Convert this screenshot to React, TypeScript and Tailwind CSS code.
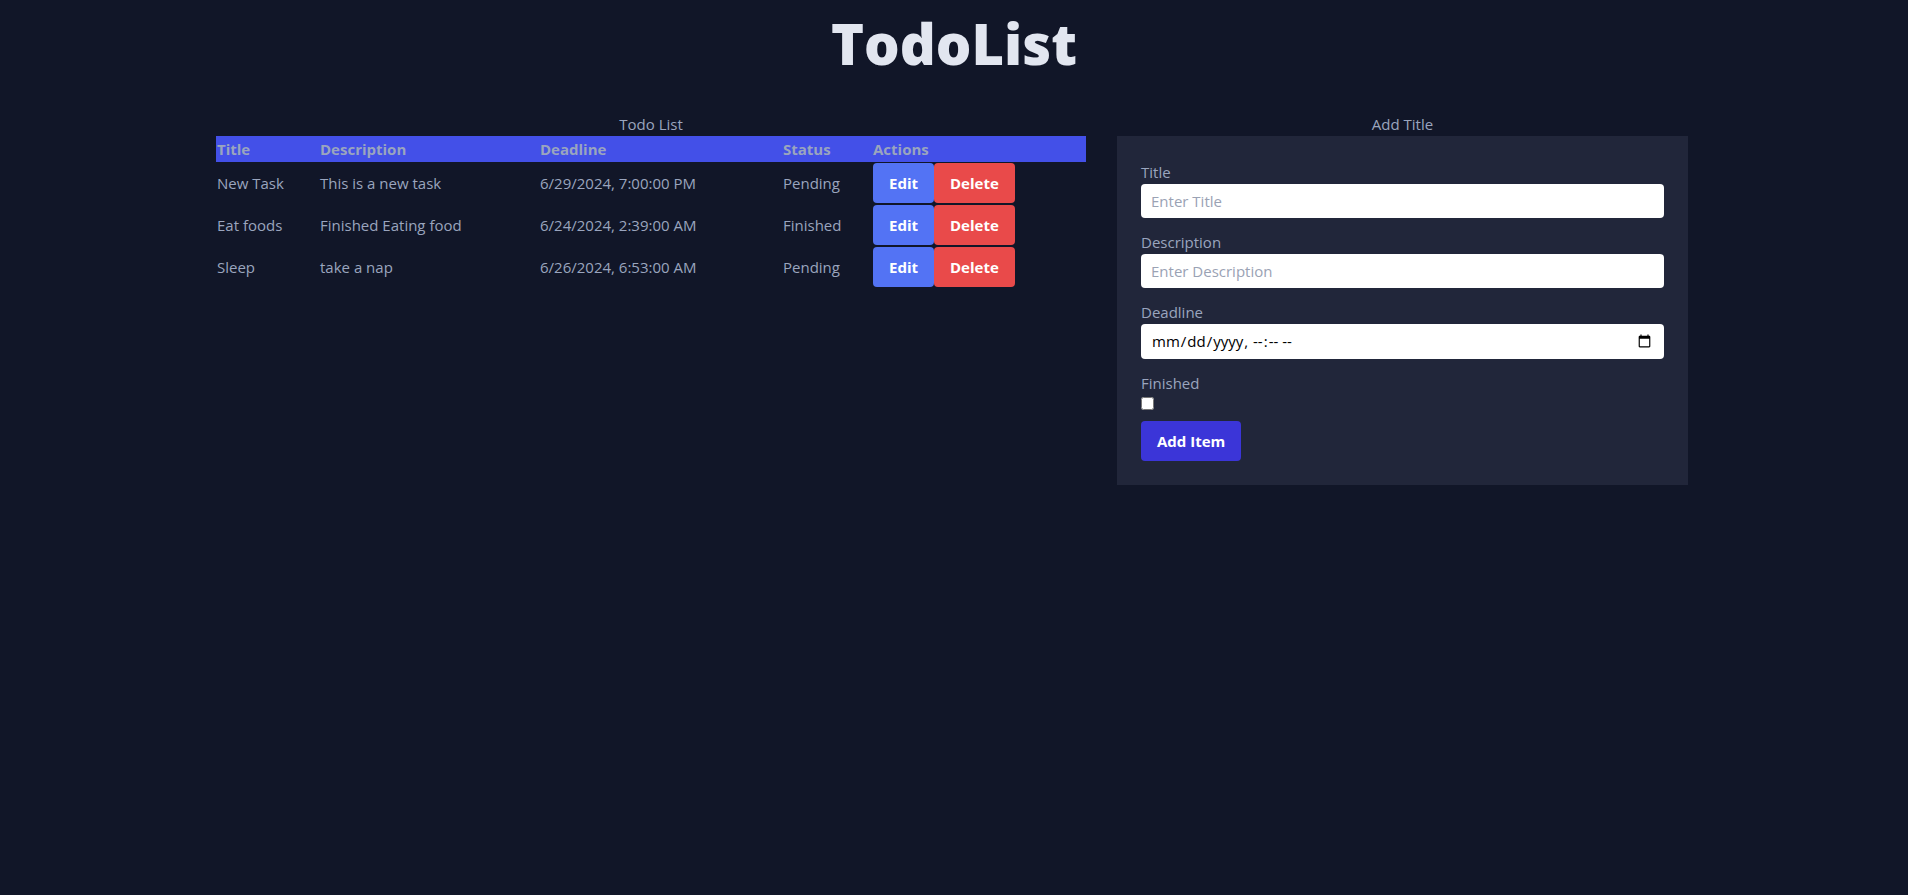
import React from "react";

const todos = [
  { title: "New Task", description: "This is a new task", deadline: "6/29/2024, 7:00:00 PM", status: "Pending" },
  { title: "Eat foods", description: "Finished Eating food", deadline: "6/24/2024, 2:39:00 AM", status: "Finished" },
  { title: "Sleep", description: "take a nap", deadline: "6/26/2024, 6:53:00 AM", status: "Pending" },
];

export default function App() {
  return (
    <div className="min-h-[895px] w-full bg-[#111628] font-['Open_Sans',sans-serif] text-[15px] text-[#9aa5be]">
      <h1 className="pt-[13px] text-center text-[56px] leading-[60px] font-extrabold text-[#e2e6f0]">TodoList</h1>
      <div className="mt-[39px] flex gap-[31px] pl-[216px]">
        <div className="w-[870px]">
          <table className="w-[870px] table-fixed">
            <caption className="h-[24px] leading-[24px] text-center">Todo List</caption>
            <thead>
              <tr className="bg-[#4350e8]">
                <th className="w-[103px] p-[1px] text-left font-bold leading-[24px]">Title</th>
                <th className="w-[220px] p-[1px] text-left font-bold leading-[24px]">Description</th>
                <th className="w-[243px] p-[1px] text-left font-bold leading-[24px]">Deadline</th>
                <th className="w-[90px] p-[1px] text-left font-bold leading-[24px]">Status</th>
                <th className="p-[1px] text-left font-bold leading-[24px]">Actions</th>
              </tr>
            </thead>
            <tbody>
              {todos.map((t) => (
                <tr key={t.title}>
                  <td className="p-[1px] align-middle leading-[24px]">{t.title}</td>
                  <td className="p-[1px] align-middle leading-[24px]">{t.description}</td>
                  <td className="p-[1px] align-middle leading-[24px]">{t.deadline}</td>
                  <td className="p-[1px] align-middle leading-[24px]">{t.status}</td>
                  <td className="p-[1px] align-middle">
                    <div className="flex">
                      <button className="h-[40px] rounded bg-[#5373f4] px-4 font-bold leading-[24px] text-white">Edit</button>
                      <button className="h-[40px] rounded bg-[#e94a4a] px-4 font-bold leading-[24px] text-white">Delete</button>
                    </div>
                  </td>
                </tr>
              ))}
            </tbody>
          </table>
        </div>
        <div className="w-[571px]">
          <h2 className="h-[24px] text-center leading-[24px]">Add Title</h2>
          <div className="bg-[#21263a] p-6">
            <label className="block leading-[24px]">Title</label>
            <input
              type="text"
              placeholder="Enter Title"
              className="block h-[34px] w-full rounded bg-white px-[10px] text-[15px] text-black placeholder:text-[#9aa2b4] outline-none"
            />
            <label className="mt-3 block leading-[24px]">Description</label>
            <input
              type="text"
              placeholder="Enter Description"
              className="block h-[34px] w-full rounded bg-white px-[10px] text-[15px] text-black placeholder:text-[#9aa2b4] outline-none"
            />
            <label className="mt-3 block leading-[24px]">Deadline</label>
            <input
              type="datetime-local"
              className="block h-[35px] w-full rounded bg-white px-[10px] text-[15px] text-black outline-none"
            />
            <label className="mt-3 block leading-[24px]">Finished</label>
            <input type="checkbox" className="m-0 mt-[2px] block h-[13px] w-[13px]" />
            <button className="mt-[11px] h-[40px] rounded bg-[#3b35d8] px-4 font-bold leading-[24px] text-white">Add Item</button>
          </div>
        </div>
      </div>
    </div>
  );
}
